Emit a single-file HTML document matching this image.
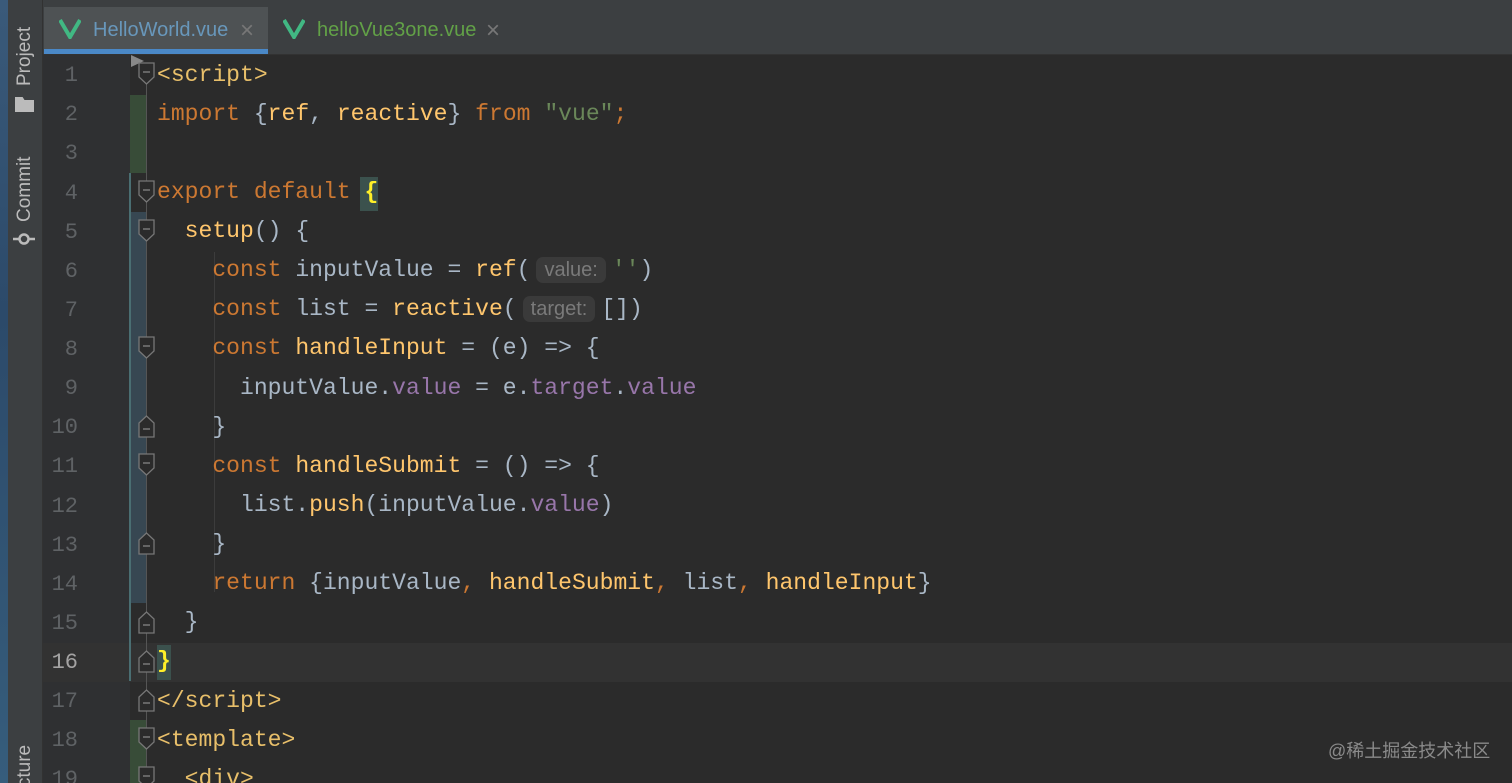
<!DOCTYPE html><html style="overflow:hidden"><head><meta charset="utf-8"><style>
html,body{overflow:hidden;height:783px}
body{margin:0;width:1512px;background:#2b2b2b;position:relative;font-family:"Liberation Sans",sans-serif}
.abs{position:absolute}
#wall{left:0;top:0;width:8px;height:783px;background:linear-gradient(#3a5a7a,#2c4a6a 40%,#365d7c)}
#strip{left:8px;top:0;width:34px;height:783px;background:#3c3f41;border-right:1px solid #323232;overflow:hidden}
#tabs{left:43px;top:0;width:1469px;height:54px;background:#3c3f41;border-bottom:1px solid #323232}
.vt{position:absolute;transform:rotate(-90deg);transform-origin:left top;color:#bbbbbb;font-size:19px;white-space:nowrap}
#gutter{left:43px;top:55px;width:87px;height:728px;background:#2f3032}
.ln{position:absolute;left:43px;width:35px;text-align:right;font-family:"Liberation Mono",monospace;font-size:22px;color:#5f6265}
#code{left:157px;top:55.5px;font-family:"Liberation Mono",monospace;font-size:23.05px;line-height:39.13px;color:#a9b7c6;white-space:pre}
.k{color:#cc7832}.f{color:#ffc66d}.s{color:#6a8759}.p{color:#9876aa}.t{color:#e8bf6a}
.h{font-family:"Liberation Sans",sans-serif;font-size:20px;color:#7a7a7a;background:#3a3a3a;border-radius:7px;padding:2px 8px;margin:0 6px 0 6px}
</style></head><body>
<div class="abs" id="wall"></div>
<div class="abs" id="strip"><div class="vt" style="left:6px;top:86px">Project</div>
<div class="vt" style="left:6px;top:222px">Commit</div>
<div class="vt" style="left:6px;top:822px">Structure</div></div>
<div class="abs" style="left:15px;top:97px;width:19px;height:15px;background:#bbb;clip-path:polygon(0 0,40% 0,50% 20%,100% 20%,100% 100%,0 100%)"></div>
<svg class="abs" style="left:12px;top:230px" width="24" height="18"><circle cx="12" cy="9" r="4.5" fill="none" stroke="#bbb" stroke-width="2.5"/><line x1="1" y1="9" x2="7" y2="9" stroke="#bbb" stroke-width="2.5"/><line x1="17" y1="9" x2="23" y2="9" stroke="#bbb" stroke-width="2.5"/></svg>
<div class="abs" id="tabs"></div>
<div class="abs" style="left:44px;top:7px;width:224px;height:47px;background:#4e5254"></div>
<div class="abs" style="left:44px;top:49px;width:224px;height:5px;background:#4a88c7"></div>
<svg class="abs" style="left:59px;top:19px" width="22" height="20"><path d="M1 1 L11 18 L21 1" fill="none" stroke="#41b883" stroke-width="4"/></svg>
<div class="abs" style="left:93px;top:19px;font-size:20px;color:#6897bb">HelloWorld.vue</div>
<div class="abs" style="left:240px;top:17px;font-size:24px;color:#777">×</div>
<svg class="abs" style="left:283px;top:19px" width="22" height="20"><path d="M1 1 L11 18 L21 1" fill="none" stroke="#41b883" stroke-width="4"/></svg>
<div class="abs" style="left:317px;top:19px;font-size:20px;color:#62a147">helloVue3one.vue</div>
<div class="abs" style="left:486px;top:17px;font-size:24px;color:#777">×</div>
<div class="abs" id="gutter"></div>
<div class="abs" style="left:43px;top:643px;width:1469px;height:39px;background:#323232"></div>
<div class="abs" style="left:157px;top:645px;width:14px;height:35px;background:#3b514d"></div>
<div class="abs" style="left:360px;top:177px;width:18px;height:34px;background:#3b514d"></div>
<div class="abs" style="left:130px;top:95px;width:16px;height:78px;background:#384c38"></div>
<div class="abs" style="left:130px;top:212px;width:16px;height:391px;background:#374752"></div>
<div class="abs" style="left:129px;top:173px;width:2px;height:508px;background:#4a6e72"></div>
<div class="abs" style="left:130px;top:720px;width:16px;height:63px;background:#384c38"></div>
<div class="abs" style="left:146px;top:65px;width:1px;height:718px;background:#555"></div>
<div class="abs" style="left:214px;top:252px;width:1px;height:340px;background:#3c3c3c"></div>
<svg class="abs" style="left:130px;top:54px" width="16" height="14"><path d="M1 1 L14 7 L1 13Z" fill="#888"/></svg>
<svg class="abs" style="left:0;top:0;pointer-events:none" width="160" height="783">
<g fill="#2b2b2b" stroke="#777" stroke-width="1.3">
<path d="M139 63h15v14l-7.5 7l-7.5-7z"/><path d="M139 181h15v14l-7.5 7l-7.5-7z"/><path d="M139 220h15v14l-7.5 7l-7.5-7z"/><path d="M139 337h15v14l-7.5 7l-7.5-7z"/><path d="M139 454h15v14l-7.5 7l-7.5-7z"/><path d="M139 728h15v14l-7.5 7l-7.5-7z"/><path d="M139 767h15v14l-7.5 7l-7.5-7z"/>
<path d="M139 437v-14l7.5-7l7.5 7v14z"/><path d="M139 554v-14l7.5-7l7.5 7v14z"/><path d="M139 633v-14l7.5-7l7.5 7v14z"/><path d="M139 672v-14l7.5-7l7.5 7v14z"/><path d="M139 711v-14l7.5-7l7.5 7v14z"/>
</g>
<g stroke="#888" stroke-width="1.3">
<path d="M143 72h7M143 190h7M143 229h7M143 346h7M143 463h7M143 737h7M143 776h7M143 429h7M143 546h7M143 625h7M143 664h7M143 703h7"/></g></svg>
<div class="ln" style="top:63px">1</div><div class="ln" style="top:102px">2</div><div class="ln" style="top:141px">3</div><div class="ln" style="top:181px">4</div><div class="ln" style="top:220px">5</div><div class="ln" style="top:259px">6</div><div class="ln" style="top:298px">7</div><div class="ln" style="top:337px">8</div><div class="ln" style="top:376px">9</div><div class="ln" style="top:415px">10</div><div class="ln" style="top:454px">11</div><div class="ln" style="top:494px">12</div><div class="ln" style="top:533px">13</div><div class="ln" style="top:572px">14</div><div class="ln" style="top:611px">15</div><div class="ln" style="top:650px;color:#a4a3a3">16</div><div class="ln" style="top:689px">17</div><div class="ln" style="top:728px">18</div><div class="ln" style="top:767px">19</div>
<div class="abs" id="code"><span class="t">&lt;script&gt;</span>
<span class="k">import</span> {<span class="f">ref</span>, <span class="f">reactive</span>} <span class="k">from</span> <span class="s">"vue"</span><span class="k">;</span>

<span class="k">export default</span> <span style="color:#ffef28;font-weight:bold">{</span>
  <span class="f">setup</span>() {
    <span class="k">const</span> inputValue = <span class="f">ref</span>(<span class="h">value:</span><span class="s">''</span>)
    <span class="k">const</span> list = <span class="f">reactive</span>(<span class="h">target:</span>[])
    <span class="k">const</span> <span class="f">handleInput</span> = (e) => {
      inputValue.<span class="p">value</span> = e.<span class="p">target</span>.<span class="p">value</span>
    }
    <span class="k">const</span> <span class="f">handleSubmit</span> = () => {
      list.<span class="f">push</span>(inputValue.<span class="p">value</span>)
    }
    <span class="k">return</span> {inputValue<span class="k">,</span> <span class="f">handleSubmit</span><span class="k">,</span> list<span class="k">,</span> <span class="f">handleInput</span>}
  }
<span style="color:#ffef28;font-weight:bold">}</span>
<span class="t">&lt;/script&gt;</span>
<span class="t">&lt;template&gt;</span>
  <span class="t">&lt;div&gt;</span></div>
<div class="abs" style="left:1328px;top:737px;font-size:18px;color:#8a8a8a;font-family:'Liberation Sans','Noto Sans CJK SC',sans-serif">@稀土掘金技术社区</div>
</body></html>
